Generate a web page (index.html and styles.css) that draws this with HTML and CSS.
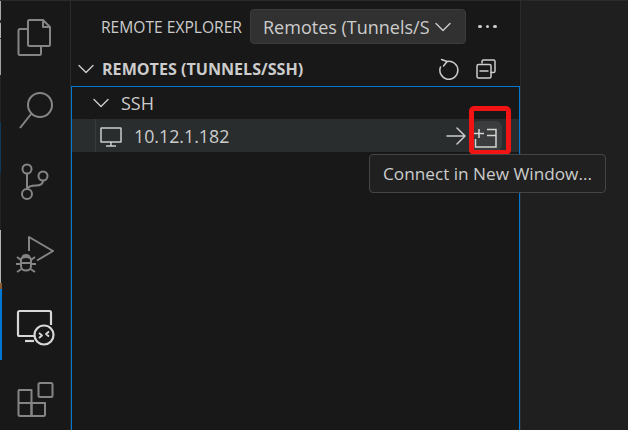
FILE: index.html
```html
<!DOCTYPE html>
<html lang="en">
<head>
  <meta charset="UTF-8">
  <title>Remote Explorer</title>
  <link rel="stylesheet" href="styles.css">
</head>
<body>
  <div class="app">
    <!-- activity bar -->
    <nav class="activity-bar">
      <div class="edge-strip">
        <i class="seg seg-a"></i><i class="seg seg-b"></i><i class="seg seg-c"></i><i class="seg seg-b2"></i><i class="seg seg-d"></i><i class="seg seg-e"></i><i class="seg seg-f"></i><i class="seg seg-g"></i><i class="seg seg-h"></i><i class="seg seg-i"></i><i class="seg seg-j"></i>
      </div>
      <div class="activity-icons">
        <div class="activity-item">
          <svg class="activity-icon" viewBox="0 0 40 40"><path d="M13 12H5a1.5 1.5 0 0 0-1.5 1.500V36.500A1.500 1.500 0 0 0 5 38H24.500A1.500 1.500 0 0 0 26 36.500V29.500"/><path d="M14.500 3H28L35 10V27.500A1.500 1.500 0 0 1 33.500 29H14.500A1.500 1.500 0 0 1 13 27.500V4.500A1.500 1.500 0 0 1 14.500 3Z"/><path d="M28 3V10H35"/></svg>
        </div>
        <div class="activity-item">
          <svg class="activity-icon" viewBox="0 0 40 40"><circle cx="25" cy="15" r="12"/><path d="M16.500 23.500L5 38"/></svg>
        </div>
        <div class="activity-item">
          <svg class="activity-icon" viewBox="0 0 40 40"><circle cx="12" cy="7" r="4.500"/><circle cx="12" cy="32" r="5"/><circle cx="28" cy="14" r="4.500"/><path d="M12 11.500V27"/><path d="M28 18.500C28 22 25 23.500 21 23.500C16 23.500 13 25 12 27"/></svg>
        </div>
        <div class="activity-item">
          <svg class="activity-icon" viewBox="0 0 40 40"><path d="M14 17V3L38 17L22 26.500"/><path d="M6 26C6 22 16 22 16 26V32C16 38 6 38 6 32Z"/><path d="M7.500 24C7.500 20 14.500 20 14.500 24M6 29H16M2 23L6 26M20 23L16 26M1 30H6M21 30H16M2 38L6.500 35M20 38L15.500 35"/></svg>
        </div>
        <div class="activity-item">
          <svg class="activity-icon active" viewBox="0 0 40 40"><path d="M19 29H4.500A1.500 1.500 0 0 1 3 27.500V5.500A1.500 1.500 0 0 1 4.500 4H34.500A1.500 1.500 0 0 1 36 5.500V18"/><path d="M10 34H19"/><circle cx="29" cy="28" r="9.500"/><path class="thin" d="M24 26L27 28.500L24 31M34 24.500L31 27L34 29.500"/></svg>
        </div>
        <div class="activity-item">
          <svg class="activity-icon" viewBox="0 0 40 40"><path d="M4 11H16.500V37H5A1.500 1.500 0 0 1 3.500 35.500V12A1 1 0 0 1 4 11Z"/><path d="M3.500 24H30V35.500A1.500 1.500 0 0 1 28.500 37H16.500V24"/><rect x="23.500" y="4" width="14" height="14" rx="1.500"/></svg>
        </div>
      </div>
    </nav>

    <!-- side bar -->
    <section class="sidebar">
      <header class="view-header">
        <span class="view-title">REMOTE EXPLORER</span>
        <div class="view-select">
          <span class="view-select-text">Remotes (Tunnels/SSH)</span>
          <svg class="icon-sm" viewBox="0 0 18 18"><path d="M2 5.500L9 12.500L16 5.500"/></svg>
        </div>
        <div class="more-dots"><i></i><i></i><i></i></div>
      </header>

      <div class="section-header">
        <svg class="icon-sm section-chevron" viewBox="0 0 18 18"><path d="M2 5.500L9 12.500L16 5.500"/></svg>
        <span class="section-title">REMOTES (TUNNELS/SSH)</span>
        <div class="section-actions">
          <svg class="icon-md" viewBox="0 0 22 22"><path d="M9 3.500A9 9 0 1 1 2.500 9"/><path d="M3.500 1.500L9 3.500L5.500 8"/></svg>
          <svg class="icon-md" viewBox="0 0 22 22"><path d="M7 5V3.500A1.500 1.500 0 0 1 8.500 2H18.500A1.500 1.500 0 0 1 20 3.500V13A1.500 1.500 0 0 1 18.500 14.500H16"/><rect x="2" y="6.500" width="14" height="13.500" rx="1.500"/><path d="M5 13H13"/></svg>
        </div>
      </div>

      <div class="tree">
        <div class="tree-row ssh-row">
          <svg class="icon-sm" viewBox="0 0 18 18"><path d="M2 5.500L9 12.500L16 5.500"/></svg>
          <span>SSH</span>
        </div>
        <div class="tree-row host-row">
          <div class="host-cell">
            <svg class="icon-host" viewBox="0 0 22 22"><path d="M1.500 3H20.500A.5.5 0 0 1 21 3.500V17H1V3.500A.5.5 0 0 1 1.500 3Z"/><path d="M11 17V20.500M6 21H16"/></svg>
            <span>10.12.1.182</span>
          </div>
          <div class="host-actions">
            <svg class="icon-arrow" viewBox="0 0 20 20"><path d="M1 10H19M11 2L19 10L11 18"/></svg>
            <div class="window-button">
              <svg class="icon-window" viewBox="0 0 30 30"><path d="M3.500 18V26H24V8.500H15"/><path d="M15 14.500H24"/><path d="M2 12.500H12M7 8V17"/></svg>
            </div>
          </div>
        </div>
      </div>
    </section>

    <div class="editor"></div>

    <!-- annotation and tooltip -->
    <div class="red-box"></div>
    <div class="tooltip">Connect in New Window...</div>
  </div>
</body>
</html>
```

FILE: styles.css
```css
* {
  box-sizing: border-box;
}

html, body {
  margin: 0;
  height: 100%;
  overflow: hidden;
  background: #181818;
}

body {
  font-family: "Open Sans", "Noto Sans", sans-serif;
  color: #cccccc;
}

svg {
  fill: none;
  stroke-linecap: round;
  stroke-linejoin: round;
  flex: none;
}

.app {
  position: relative;
  display: flex;
  width: 628px;
  height: 430px;
  border-top: 1px solid #2b2b2b;
}

/* activity bar */
.activity-bar {
  display: flex;
  width: 71px;
  flex: none;
  border-right: 1px solid #2b2b2b;
}

.edge-strip {
  width: 2px;
  display: flex;
  flex-direction: column;
}

.seg {
  display: block;
  width: 1px;
}

.seg-a { height: 19px; background: #a8a8a8; }
.seg-b { height: 3px; background: #333333; }
.seg-c { height: 15px; background: #b0b0b0; }
.seg-b2 { height: 1px; background: #333333; }
.seg-d { height: 36px; background: #a0a0a0; }
.seg-e { height: 47px; background: #242424; }
.seg-f { height: 51px; background: #0d3a58; }
.seg-g { height: 57px; background: #242424; }
.seg-h { height: 53px; background: #b4b4b4; }
.seg-i { height: 6px; width: 2px; background: #8a5a30; }
.seg-j { height: 71px; width: 2px; background: #0078d4; }

.activity-icons {
  flex: 1;
  padding-left: 13px;
}

.activity-item {
  height: 72.400px;
  display: flex;
  align-items: center;
}

.activity-icon {
  width: 40px;
  height: 40px;
  stroke: #858585;
  stroke-width: 2;
  stroke-linecap: butt;
}

.activity-icon.active {
  stroke: #d7d7d7;
  stroke-width: 2.200;
}

.activity-icon .thin {
  stroke-width: 1.800;
}

/* side bar */
.sidebar {
  width: 450px;
  flex: none;
  display: flex;
  flex-direction: column;
  border-right: 1px solid #2b2b2b;
}

.view-header {
  height: 51px;
  display: flex;
  align-items: center;
  padding: 0 0 0 30px;
}

.view-title {
  width: 149px;
  font-size: 15.600px;
  white-space: nowrap;
}

.view-select {
  width: 216px;
  height: 35px;
  display: flex;
  align-items: center;
  gap: 5px;
  padding: 0 13px 0 12px;
  background: #313131;
  border: 1px solid #3c3c3c;
  border-radius: 4px;
  font-size: 18px;
}

.view-select-text {
  flex: 1;
  overflow: hidden;
  white-space: nowrap;
}

.more-dots {
  display: flex;
  gap: 4px;
  margin-left: 12px;
}

.more-dots i {
  display: block;
  width: 3.500px;
  height: 3.500px;
  border-radius: 50%;
  background: #cccccc;
}

.icon-sm {
  width: 18px;
  height: 18px;
  stroke: #cccccc;
  stroke-width: 1.400;
}

.section-header {
  height: 34px;
  display: flex;
  align-items: center;
  padding-left: 6px;
}

.section-title {
  margin-left: 7px;
  font-size: 16.100px;
  font-weight: 700;
  white-space: nowrap;
}

.section-actions {
  display: flex;
  gap: 15px;
  margin-left: auto;
  padding-right: 23px;
}

.icon-md {
  width: 22px;
  height: 22px;
  stroke: #cccccc;
  stroke-width: 1.500;
}

/* tree */
.tree {
  flex: 1;
  border: 1px solid #0078d4;
  border-bottom: none;
}

.tree-row {
  display: flex;
  align-items: center;
  font-size: 18px;
}

.ssh-row {
  height: 32px;
  gap: 11px;
  padding-left: 20px;
}

.host-row {
  height: 33px;
  background: #2a2d2e;
  padding-left: 23px;
}

.host-cell {
  flex: 1;
  height: 100%;
  display: flex;
  align-items: center;
  gap: 12px;
  padding-left: 4px;
  font-size: 17.800px;
  border-left: 1px solid #3a3a3a;
}

.icon-host {
  width: 22px;
  height: 22px;
  stroke: #cccccc;
  stroke-width: 1.500;
  stroke-linecap: butt;
}

.host-actions {
  display: flex;
  align-items: center;
  gap: 6px;
  padding-right: 17px;
}

.icon-arrow {
  width: 20px;
  height: 20px;
  stroke: #cccccc;
  stroke-width: 1.500;
}

.window-button {
  width: 30px;
  height: 30px;
  background: #3a3c3d;
  border-radius: 6px;
}

.icon-window {
  display: block;
  width: 30px;
  height: 30px;
  stroke: #d4d4d4;
  stroke-width: 1.500;
  stroke-linecap: butt;
  stroke-linejoin: miter;
}

.editor {
  flex: 1;
  background: #1f1f1f;
}

/* overlays */
.red-box {
  position: absolute;
  left: 469px;
  top: 105px;
  width: 42px;
  height: 49px;
  border: 5px solid #f01414;
  border-radius: 5px;
}

.tooltip {
  position: absolute;
  left: 369px;
  top: 153px;
  width: 237px;
  height: 39px;
  display: flex;
  align-items: center;
  justify-content: center;
  background: #202020;
  border: 1px solid #454545;
  border-radius: 4px;
  font-size: 17.200px;
  white-space: nowrap;
}
```
